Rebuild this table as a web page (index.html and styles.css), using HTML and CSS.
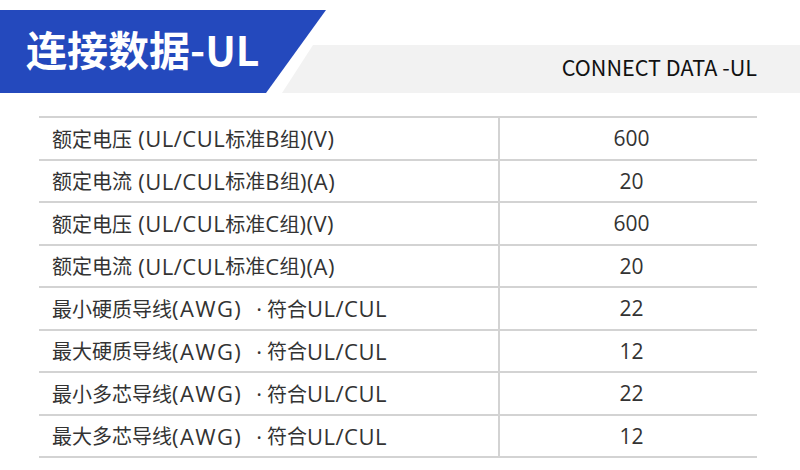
FILE: index.html
```html
<!DOCTYPE html>
<html lang="zh-CN">
<head>
<meta charset="utf-8">
<title>连接数据-UL</title>
<link rel="stylesheet" href="styles.css">
</head>
<body>
<header class="banner">
  <div class="banner-title"><h1>连接数据-UL</h1></div>
  <div class="banner-band"><span>CONNECT DATA -UL</span></div>
</header>
<section class="spec">
  <div class="row"><div class="label">额定电压<span class="en"> (UL/CUL</span>标准<span class="en">B</span>组<span class="en">)(V)</span></div><div class="value">600</div></div>
  <div class="row"><div class="label">额定电流<span class="en"> (UL/CUL</span>标准<span class="en">B</span>组<span class="en">)(A)</span></div><div class="value">20</div></div>
  <div class="row"><div class="label">额定电压<span class="en"> (UL/CUL</span>标准<span class="en">C</span>组<span class="en">)(V)</span></div><div class="value">600</div></div>
  <div class="row"><div class="label">额定电流<span class="en"> (UL/CUL</span>标准<span class="en">C</span>组<span class="en">)(A)</span></div><div class="value">20</div></div>
  <div class="row"><div class="label">最小硬质导线<span class="en awg">(AWG)</span><span class="sep">·</span>符合<span class="en">UL/CUL</span></div><div class="value">22</div></div>
  <div class="row"><div class="label">最大硬质导线<span class="en awg">(AWG)</span><span class="sep">·</span>符合<span class="en">UL/CUL</span></div><div class="value">12</div></div>
  <div class="row"><div class="label">最小多芯导线<span class="en awg">(AWG)</span><span class="sep">·</span>符合<span class="en">UL/CUL</span></div><div class="value">22</div></div>
  <div class="row"><div class="label">最大多芯导线<span class="en awg">(AWG)</span><span class="sep">·</span>符合<span class="en">UL/CUL</span></div><div class="value">12</div></div>
</section>
</body>
</html>
```

FILE: styles.css
```css
html, body {
  margin: 0;
  padding: 0;
  background: #ffffff;
}
body {
  width: 800px;
  height: 470px;
  overflow: hidden;
  font-family: "Open Sans", "Noto Sans CJK SC", sans-serif;
}
.banner {
  display: flex;
  align-items: flex-end;
  height: 93px;
}
.banner-title {
  flex: 0 0 326px;
  height: 83px;
  background: #2449bd;
  clip-path: polygon(0 0, 100% 0, 266px 100%, 0 100%);
  display: flex;
  align-items: center;
  position: relative;
  z-index: 1;
}
.banner-title h1 {
  margin: -6px 0 0 26px;
  color: #ffffff;
  font-family: "Noto Sans CJK SC", sans-serif;
  font-size: 41px;
  font-weight: 700;
  line-height: 1;
}
.banner-band {
  flex: 1;
  margin-left: -44px;
  height: 48px;
  background: #f2f2f2;
  clip-path: polygon(31px 0, 100% 0, 100% 100%, 0 100%);
  display: flex;
  align-items: center;
  justify-content: flex-end;
  padding-right: 43px;
}
.banner-band span {
  font-family: "Noto Sans CJK SC", sans-serif;
  font-size: 21.6px;
  color: #111111;
  line-height: 1;
  margin-top: -4px;
}
.spec {
  margin: 23px 0 0 39px;
  width: 718px;
  border-top: 2px solid #d3d3d3;
}
.row {
  display: grid;
  grid-template-columns: 461px 1fr;
  height: 40.5px;
  border-bottom: 2px solid #d3d3d3;
  color: #333333;
  font-size: 20px;
}
.label {
  border-right: 2px solid #d3d3d3;
  padding-left: 13px;
  display: flex;
  align-items: center;
  white-space: pre;
  font-family: "Noto Sans CJK SC", sans-serif;
}
.label .en {
  font-family: "Open Sans", sans-serif;
  font-size: 22px;
  letter-spacing: 0.5px;
}
.label .awg {
  letter-spacing: 1.4px;
}
.label .sep {
  font-family: "Open Sans", sans-serif;
  font-size: 22px;
  margin: 0 5px 0 14px;
}
.value {
  display: flex;
  align-items: center;
  justify-content: center;
  padding-left: 6px;
  font-size: 21px;
}
```
